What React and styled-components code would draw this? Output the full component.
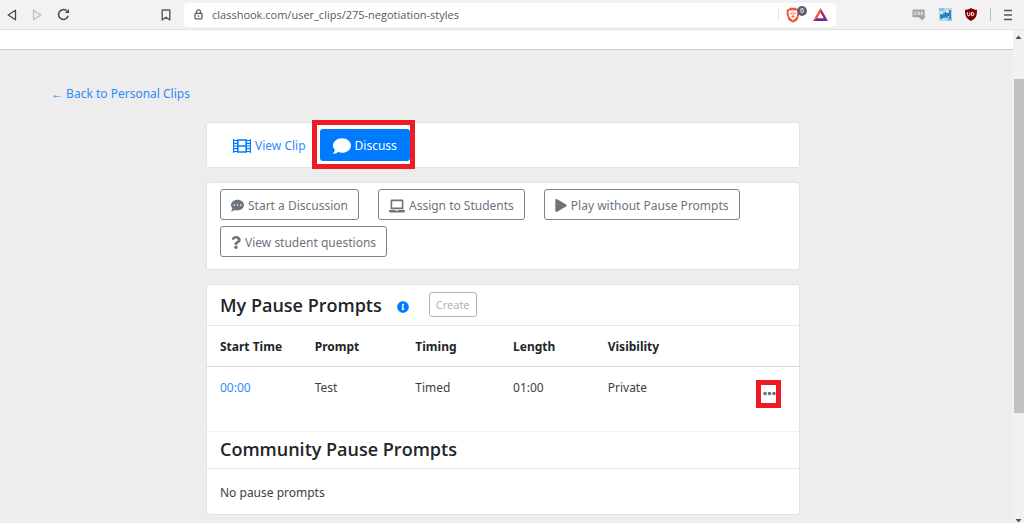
import React from "react";
import styled, { createGlobalStyle, css } from "styled-components";
import {
  FaComment,
  FaCommentDots,
  FaLaptop,
  FaPlay,
  FaQuestion,
  FaInfoCircle,
  FaEllipsisH,
} from "react-icons/fa";

const GlobalStyle = createGlobalStyle`
  *, *::before, *::after { box-sizing: border-box; }
  html, body, #root { height: 100%; }
  body {
    margin: 0;
    font-family: "Noto Sans", "Open Sans", sans-serif;
    font-size: 12px;
    line-height: 20px;
    color: #212529;
    background: #ededed;
  }
  button, input { font: inherit; }
`;

const Browser = styled.div`
  display: flex;
  flex-direction: column;
  height: 100vh;
  overflow: hidden;
`;

const Toolbar = styled.header`
  flex: none;
  display: flex;
  align-items: center;
  height: 30px;
  padding: 0 5px;
  background: #f2f2f2;
  border-bottom: 1px solid #e2e2e2;
`;

const ToolButton = styled.button`
  display: flex;
  align-items: center;
  justify-content: center;
  flex: none;
  width: ${(p) => p.$width || 26}px;
  height: 20px;
  padding: 0;
  border: 0;
  background: none;
  position: relative;
  svg { display: block; }
`;

const NavGroup = styled.div`
  display: flex;
  flex: 0 1 148px;
`;

const AddressBar = styled.div`
  display: flex;
  align-items: center;
  flex: 0 1 652px;
  min-width: 0;
  height: 24px;
  margin-left: 5px;
  padding: 0 3px 0 10px;
  background: #fff;
  border-radius: 4px;
`;

const AddressInput = styled.input`
  flex: 1;
  min-width: 0;
  height: 20px;
  margin-left: 9px;
  padding: 0;
  border: 0;
  outline: 0;
  background: none;
  font-family: "Open Sans", sans-serif;
  font-size: 11px;
  color: #5a5a5a;
`;

const Divider = styled.span`
  width: 1px;
  height: 13px;
  margin: 0 ${(p) => p.$gap || 0}px;
  background: ${(p) => p.$color || "#e8e8e8"};
`;

const ShieldCount = styled.span`
  position: absolute;
  top: 1px;
  right: 0;
  width: 10px;
  height: 10px;
  border-radius: 5px;
  background: #5c6070;
  color: #fff;
  font-size: 7px;
  line-height: 10px;
  text-align: center;
`;

const Extensions = styled.div`
  display: flex;
  align-items: center;
  margin-left: auto;
`;

const Viewport = styled.div`
  flex: 1;
  display: flex;
  min-height: 0;
`;

const Page = styled.div`
  flex: 1;
  min-width: 0;
  overflow: hidden;
  background: #ededed;
`;

const SiteNav = styled.div`
  height: 20px;
  background: #fff;
  border-bottom: 1px solid #cbcbcb;
`;

const Main = styled.main`
  padding: 34px 58px 8px 51px;
`;

const Link = styled.a`
  color: #2f8bfa;
  text-decoration: none;
`;

const Stack = styled.div`
  display: flex;
  flex-direction: column;
  gap: 14px;
  max-width: 594px;
  margin: 18px auto 0;
`;

const Card = styled.section`
  background: #fff;
  border: 1px solid #e0e2e5;
  border-radius: 3px;
`;

const Tabs = styled(Card)`
  display: flex;
  align-items: center;
  gap: 1px;
  height: 46px;
  padding: 0 13px;
`;

const highlight = css`
  position: relative;
  &::after {
    content: "";
    position: absolute;
    inset: ${(p) => p.$inset};
    border: 5px solid #ed1c24;
    pointer-events: none;
  }
`;

const Tab = styled.a`
  display: flex;
  align-items: center;
  gap: 4px;
  height: 32px;
  padding: 2px 13px 0;
  border-radius: 3px;
  text-decoration: none;
  color: ${(p) => (p.$active ? "#fff" : "#2f8bfa")};
  background: ${(p) => (p.$active ? "#007bff" : "transparent")};
  ${(p) => p.$inset && highlight}
`;

const Actions = styled(Card)`
  display: flex;
  flex-wrap: wrap;
  gap: 6px 19px;
  padding: 6px 13px 12px;
`;

const ActionButton = styled.button`
  display: flex;
  align-items: center;
  gap: 4px;
  height: 31px;
  padding: 2px 10px 0;
  border: 1px solid #7b838a;
  border-radius: 3px;
  background: #fff;
  color: #6c757d;
`;

const PlayIcon = styled(FaPlay)`
  width: 12px;
  height: 13px;
`;

const QuestionIcon = styled(FaQuestion)`
  width: 10px;
  height: 13px;
`;

const CardHeader = styled.div`
  display: flex;
  align-items: center;
  height: ${(p) => p.$height}px;
  padding: 0 13px 1px;
  border-bottom: 1px solid #e6e7e8;
`;

const Heading = styled.h2`
  margin: 0;
  font-family: "Open Sans", sans-serif;
  font-size: 18px;
  line-height: 24px;
  font-weight: 600;
`;

const InfoButton = styled.button`
  display: flex;
  margin: 4px 20px 0 15px;
  padding: 0;
  border: 0;
  background: none;
  color: #007bff;
`;

const CreateButton = styled.button`
  height: 25px;
  padding: 0 6px;
  border: 1px solid #b0b4b8;
  border-radius: 3px;
  background: #fff;
  color: #b0b4b8;
  font-size: 11px;
`;

const PromptTable = styled.table`
  width: 100%;
  table-layout: fixed;
  border-collapse: collapse;
  text-align: left;
`;

const Column = styled.col`
  width: ${(p) => p.$width};
`;

const HeadCell = styled.th`
  height: 40px;
  padding: 3px 0 0 13px;
  border-bottom: 1px solid #d5dade;
  font-weight: 700;
`;

const Cell = styled.td`
  height: 65px;
  padding: 11px 0 0 13px;
  vertical-align: top;
  border-bottom: 1px solid #eff0f1;
  color: #3c4146;
`;

const MenuCell = styled(Cell)`
  padding: 20px 23px 0 0;
`;

const MenuButton = styled.button`
  display: flex;
  margin-left: auto;
  padding: 0;
  border: 0;
  background: none;
  color: #6c757d;
  ${highlight}
`;

const Empty = styled.p`
  margin: 0;
  padding: 14px 13px 11px;
  color: #3c4146;
`;

const Scrollbar = styled.div`
  flex: none;
  display: flex;
  flex-direction: column;
  align-items: center;
  width: 11px;
  padding: 5px 0 0;
  background: #f1f1f1;
`;

const Track = styled.div`
  flex: 1;
  width: 100%;
  padding-top: 40px;
`;

const Thumb = styled.div`
  width: 10px;
  height: 76%;
  margin-left: auto;
  background: #c1c1c1;
`;

const BackIcon = () => (
  <svg width="12" height="12" viewBox="0 0 12 12" fill="none" stroke="#4a4a4a" strokeWidth="1.3" strokeLinejoin="round">
    <path d="M9.5 1.2v9.6L2.2 6z" />
  </svg>
);

const ForwardIcon = () => (
  <svg width="12" height="12" viewBox="0 0 12 12" fill="none" stroke="#bdbdbd" strokeWidth="1.2" strokeLinejoin="round">
    <path d="M2.5 1.2v9.6L9.8 6z" />
  </svg>
);

const ReloadIcon = () => (
  <svg width="13" height="13" viewBox="0 0 13 13" fill="none" stroke="#4a4a4a" strokeWidth="1.5">
    <path d="M11.2 7.8A4.900 4.900 0 1 1 9.600 2.700" />
    <path d="M7.8 5h4.200V1z" fill="#4a4a4a" stroke="none" />
  </svg>
);

const BookmarkIcon = () => (
  <svg width="10" height="12" viewBox="0 0 10 12" fill="none" stroke="#5a5a5a" strokeWidth="1.4" strokeLinejoin="round">
    <path d="M1.2 1h7.6v10L5 8.2 1.2 11z" />
  </svg>
);

const LockIcon = () => (
  <svg width="9" height="11" viewBox="0 0 9 11" fill="none" stroke="#5f5f5f" strokeWidth="1.3">
    <rect x="1" y="4.3" width="7" height="5.6" rx="0.8" />
    <path d="M2.5 4.2V2.8a2 2 0 0 1 4 0v1.4M4.5 6.2v1.8" />
  </svg>
);

const BraveIcon = () => (
  <svg width="14" height="16" viewBox="0 0 14 16">
    <path fill="#fb542b" d="M4 .8h6l1.200 1.400 1.300-.1 1.100 1.800-.5 1.400.4 1.200-1.600 5.500c-.3 1.100-1.300 1.700-2.100 2.200L7 15.600l-2.800-1.400C3.300 13.700 2.400 13.100 2.100 12L.5 6.500l.4-1.200L.4 3.900l1.100-1.800 1.300.1z" />
    <path fill="#fff" d="M3.600 3.300 5.200 3.600 7 3l1.800.6 1.600-.3 1.400 2-.6 1.800-.6 3L7 13.400l-3.600-3.300-.6-3-.6-1.800z" />
    <path fill="#fb542b" d="M3.400 5.800l2.800.5-.7 1.100zM10.600 5.800 7.800 6.300l.7 1.100zM6.600 4.600h.8l-.1 4 1.500.8L7 10.400l-1.800-1 1.500-.8z" />
  </svg>
);

const BatIcon = () => (
  <svg width="15" height="13" viewBox="0 0 15 13">
    <path fill="#ff4724" d="M7.500 0 0 13l4-2.500 3.500-6z" />
    <path fill="#9e1f63" d="M7.500 0 15 13l-4-2.500-3.500-6z" />
    <path fill="#662d91" d="M0 13h15l-4-2.700H4z" />
  </svg>
);

const CssIcon = () => (
  <svg width="14" height="12" viewBox="0 0 14 12">
    <path fill="#a3a3a3" d="M1.500.5h10.200a1 1 0 0 1 1 1v5.700h1L10.300 11.500 7 8.300H1.500a1 1 0 0 1-1-1V1.500a1 1 0 0 1 1-1z" />
    <path fill="none" stroke="#eee" strokeWidth="0.9" d="M4.500 3H2.700v2.500h1.800M7.600 3H5.900v1.200h1.500v1.300H5.700M10.800 3H9.100v1.200h1.500v1.300H8.900" />
  </svg>
);

const ChartIcon = () => (
  <svg width="13" height="13" viewBox="0 0 13 13">
    <path fill="#b4d9ea" d="M0 0h13v13H0z" />
    <path fill="#7ecbe8" d="M0 0h5v3H0zM8 10h5v3H8z" />
    <path fill="#2f8cc6" d="M1 6h2v5H1zM4 5h2v5H4zM7 5h2v5H7zM10 2h2v9h-2z" />
    <path fill="#2660a0" d="M3 7h1v3H3zM6 4h1v5H6zM9 5h1v3H9z" />
    <path fill="#e7eee2" d="M1 4h2v2H1zM7 2h2v2H7z" />
  </svg>
);

const UblockIcon = () => (
  <svg width="12" height="13" viewBox="0 0 12 13">
    <path fill="#800000" d="M6 0c2 1.400 3.500 1.700 6 1.700C12 8 11 10.400 6 13 1 10.400 0 8 0 1.700 2.500 1.700 4 1.400 6 0z" />
    <path fill="none" stroke="#fff" strokeWidth="1" d="M2.500 4.400v2.200a1.200 1.200 0 0 0 2.400 0V4.400M6.600 4.500v3.200h.7a1.600 1.600 0 0 0 0-3.200z" />
  </svg>
);

const MenuIcon = () => (
  <svg width="8" height="12" viewBox="0 0 8 12" stroke="#555" strokeWidth="1.4">
    <path d="M0 1.500h8M0 6h8M0 10.500h8" />
  </svg>
);

const FilmIcon = () => (
  <svg width="18" height="14" viewBox="0 0 18 14" fill="none" stroke="#007bff">
    <path strokeWidth="1.600" d="M4.800 1h8.400v12H4.800zM4.800 7h8.400" />
    <path strokeWidth="1.200" d="M.6 0v14M17.400 0v14M.6 1.500h4M.6 4.300h4M.6 7h4M.6 9.700h4M.6 12.500h4M13.400 1.500h4M13.400 4.300h4M13.400 7h4M13.400 9.700h4M13.400 12.500h4" />
  </svg>
);

const ScrollArrow = ({ down }) => (
  <svg width="7" height="4" viewBox="0 0 7 4">
    <path fill="#505050" d={down ? "M0.500 0h6l-3 3.500z" : "M0.500 4h6l-3-3.500z"} />
  </svg>
);

const prompts = [
  { start: "00:00", prompt: "Test", timing: "Timed", length: "01:00", visibility: "Private" },
];

export default function App() {
  return (
    <Browser>
      <GlobalStyle />
      <Toolbar>
        <NavGroup>
          <ToolButton $width={13} aria-label="Back"><BackIcon /></ToolButton>
          <ToolButton $width={38} aria-label="Forward"><ForwardIcon /></ToolButton>
          <ToolButton $width={15} aria-label="Reload"><ReloadIcon /></ToolButton>
        </NavGroup>
        <ToolButton aria-label="Bookmark this page"><BookmarkIcon /></ToolButton>
        <AddressBar>
          <LockIcon />
          <AddressInput
            type="text"
            aria-label="Address"
            defaultValue="classhook.com/user_clips/275-negotiation-styles"
          />
          <Divider />
          <ToolButton $width={28} aria-label="Shields">
            <BraveIcon />
            <ShieldCount>6</ShieldCount>
          </ToolButton>
          <ToolButton aria-label="Rewards"><BatIcon /></ToolButton>
        </AddressBar>
        <Extensions>
          <ToolButton aria-label="Styles extension"><CssIcon /></ToolButton>
          <ToolButton aria-label="Chart extension"><ChartIcon /></ToolButton>
          <ToolButton aria-label="Blocker extension"><UblockIcon /></ToolButton>
          <Divider $gap={6} $color="#bdbdbd" />
          <ToolButton $width={22} aria-label="Menu"><MenuIcon /></ToolButton>
        </Extensions>
      </Toolbar>

      <Viewport>
        <Page>
          <SiteNav />
          <Main>
            <Link href="#clips">← Back to Personal Clips</Link>
            <Stack>
              <Tabs as="nav">
                <Tab href="#view"><FilmIcon />View Clip</Tab>
                <Tab href="#discuss" $active $inset="-9px -5px -8px -8px">
                  <FaComment size={18} />Discuss
                </Tab>
              </Tabs>

              <Actions>
                <ActionButton><FaCommentDots size={13} />Start a Discussion</ActionButton>
                <ActionButton><FaLaptop size={16} />Assign to Students</ActionButton>
                <ActionButton><PlayIcon />Play without Pause Prompts</ActionButton>
                <ActionButton><QuestionIcon />View student questions</ActionButton>
              </Actions>

              <Card>
                <CardHeader $height={41}>
                  <Heading>My Pause Prompts</Heading>
                  <InfoButton aria-label="About pause prompts"><FaInfoCircle size={12} /></InfoButton>
                  <CreateButton>Create</CreateButton>
                </CardHeader>
                <PromptTable>
                  <colgroup>
                    <Column $width="16%" />
                    <Column $width="17%" />
                    <Column $width="16.5%" />
                    <Column $width="16%" />
                    <Column />
                    <Column $width="10%" />
                  </colgroup>
                  <thead>
                    <tr>
                      <HeadCell>Start Time</HeadCell>
                      <HeadCell>Prompt</HeadCell>
                      <HeadCell>Timing</HeadCell>
                      <HeadCell>Length</HeadCell>
                      <HeadCell>Visibility</HeadCell>
                      <HeadCell as="td" />
                    </tr>
                  </thead>
                  <tbody>
                    {prompts.map((p) => (
                      <tr key={p.start}>
                        <Cell><Link href="#play">{p.start}</Link></Cell>
                        <Cell>{p.prompt}</Cell>
                        <Cell>{p.timing}</Cell>
                        <Cell>{p.length}</Cell>
                        <Cell>{p.visibility}</Cell>
                        <MenuCell>
                          <MenuButton aria-label="Prompt options" $inset="-7px -5px -8px -7px">
                            <FaEllipsisH size={13} />
                          </MenuButton>
                        </MenuCell>
                      </tr>
                    ))}
                  </tbody>
                </PromptTable>
                <CardHeader $height={37}>
                  <Heading>Community Pause Prompts</Heading>
                </CardHeader>
                <Empty>No pause prompts</Empty>
              </Card>
            </Stack>
          </Main>
        </Page>
        <Scrollbar aria-hidden="true">
          <ScrollArrow />
          <Track><Thumb /></Track>
          <ScrollArrow down />
        </Scrollbar>
      </Viewport>
    </Browser>
  );
}
